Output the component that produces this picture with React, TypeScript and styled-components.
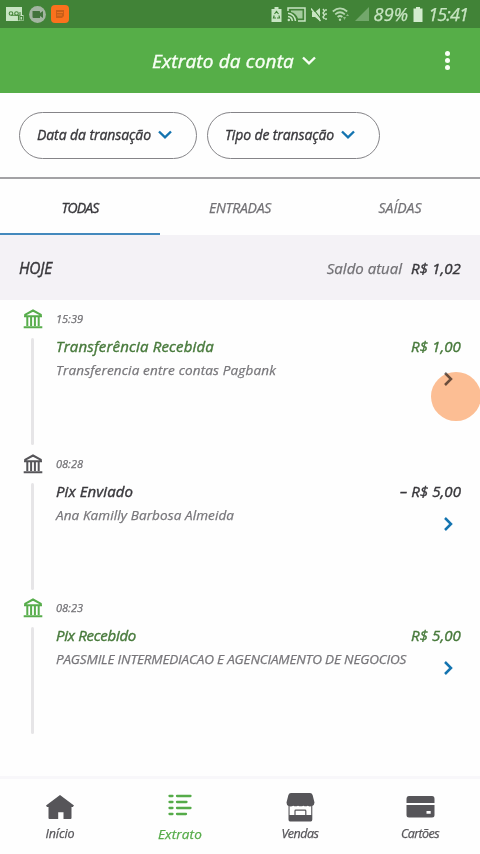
import React from 'react';
import styled, { createGlobalStyle } from 'styled-components';

const GlobalStyle = createGlobalStyle`
  * { box-sizing: border-box; }
  body { margin: 0; background: #fefefe; }
`;

const Screen = styled.div`
  position: relative;
  display: flex;
  flex-direction: column;
  width: 480px;
  height: 854px;
  overflow: hidden;
  background: #fefefe;
  color: #39383c;
  font-family: 'Open Sans', 'Noto Sans', sans-serif;
  font-style: italic;
`;

const Label = styled.span<{ $size: number; $track?: number; $color?: string; $stroke?: number }>`
  font-size: ${p => p.$size}px;
  letter-spacing: ${p => p.$track ?? 0}px;
  color: ${p => p.$color ?? 'inherit'};
  -webkit-text-stroke: ${p => p.$stroke ?? 0.25}px currentColor;
  line-height: 20px;
  white-space: nowrap;
`;

const StatusBar = styled.div`
  display: flex;
  align-items: center;
  justify-content: space-between;
  height: 28px;
  padding: 0 12px 0 6px;
  background: #418337;
  color: #c8e5c3;
`;

const StatusGroup = styled.div<{ $gap: number }>`
  display: flex;
  align-items: center;
  gap: ${p => p.$gap}px;
`;

const Header = styled.header`
  display: grid;
  grid-template-columns: 48px 1fr 48px;
  align-items: center;
  height: 65px;
  padding: 0 9px 0 12px;
  background: #56ae48;
  color: #f8fff5;
`;

const AccountPicker = styled.div`
  grid-column: 2;
  display: flex;
  align-items: center;
  justify-content: center;
  gap: 8px;
  padding-right: 15px;
`;

const Kebab = styled.div`
  display: flex;
  flex-direction: column;
  align-items: center;
  gap: 2px;
`;

const Dot = styled.i`
  width: 5px;
  height: 5px;
  border-radius: 50%;
  background: #f8fff5;
`;

const Filters = styled.div`
  display: flex;
  gap: 10px;
  height: 86px;
  padding: 19px 18px 0 19px;
  border-bottom: 2px solid #a3a2a5;
`;

const Pill = styled.div<{ $width: number }>`
  display: flex;
  align-items: center;
  gap: 7px;
  width: ${p => p.$width}px;
  height: 47px;
  padding: 0 0 1px 17px;
  border: 1.5px solid #858488;
  border-radius: 24px;
`;

const Tabs = styled.div`
  display: grid;
  grid-template-columns: repeat(3, 160px);
  height: 56px;
`;

const Tab = styled.div<{ $active?: boolean }>`
  display: flex;
  align-items: center;
  justify-content: center;
  padding-top: 3px;
  border-bottom: 2px solid ${p => (p.$active ? '#4389bd' : 'transparent')};
  color: ${p => (p.$active ? '#39383c' : '#727175')};
`;

const DayHeader = styled.div`
  display: flex;
  align-items: center;
  justify-content: space-between;
  height: 65px;
  padding: 1px 19px 0 19px;
  background: #f4f2f6;
`;

const Balance = styled.div`
  display: flex;
  gap: 9px;
`;

const Entries = styled.div`
  flex: 1;
`;

const Entry = styled.div`
  display: grid;
  grid-template-columns: 56px 1fr;
  height: 144.7px;
  padding-right: 19px;
`;

const Rail = styled.div`
  display: flex;
  flex-direction: column;
  align-items: center;
  padding: 9px 0 0 9px;
  gap: 9px;
`;

const RailLine = styled.div`
  width: 3px;
  height: 107px;
  border-radius: 2px;
  background: #e6e5e7;
`;

const EntryBody = styled.div`
  display: flex;
  flex-direction: column;
  padding-top: 9px;
`;

const EntryTitle = styled.div`
  display: flex;
  justify-content: space-between;
  margin: 7px 0 4px;
`;

const EntryDetail = styled.div`
  display: flex;
  justify-content: space-between;
  padding-right: 8px;
`;

const Advance = styled.span`
  display: flex;
  margin-top: 12px;
`;

const BottomNav = styled.nav`
  display: grid;
  grid-template-columns: repeat(4, 120px);
  height: 78px;
  border-top: 3px solid #f8f7fa;
`;

const NavItem = styled.div<{ $active?: boolean }>`
  display: flex;
  flex-direction: column;
  align-items: center;
  padding-top: 14px;
  color: ${p => (p.$active ? '#55ab49' : '#565559')};
`;

const TouchDot = styled.div`
  position: absolute;
  left: 431px;
  top: 372px;
  width: 50px;
  height: 49px;
  border-radius: 50%;
  background: #fdbf95;
  mix-blend-mode: multiply;
`;

const ChevronDown = ({ color }: { color: string }) => (
  <svg width="14" height="10" viewBox="0 0 14 10" fill="none" stroke={color} strokeWidth="2.4">
    <path d="M1 1.5 7 7.3 13 1.5" />
  </svg>
);

const ChevronRight = ({ color }: { color: string }) => (
  <svg width="9" height="14" viewBox="0 0 9 14" fill="none" stroke={color} strokeWidth="2.5">
    <path d="M1 1 7 7 1 13" />
  </svg>
);

const BankIcon = ({ color }: { color: string }) => (
  <svg width="20" height="20" viewBox="0 0 20 20" fill="none" stroke={color} strokeWidth="2">
    <path d="M1.5 6.2 10 1.5 18.5 6.2M1 7.2H19M4.3 7V17M8.1 8V17M11.9 8V17M15.7 7V17M.7 18.2H19.3" />
  </svg>
);

const NotificationIcons = () => (
  <>
    <svg width="18" height="15" viewBox="0 0 18 15">
      <path d="M0 0H16V8H17.5V14H0Z" fill="#c8e5c3" />
      <g fill="none" stroke="#458539" strokeWidth="1.1">
        <circle cx="5" cy="6.5" r="1.8" />
        <circle cx="10.5" cy="6.5" r="1.8" />
        <path d="M5 8.3H14V5M12.5 8.5V13.5M14 9.5H16.5V13H14Z" />
      </g>
    </svg>
    <svg width="17" height="17" viewBox="0 0 17 17">
      <circle cx="8.5" cy="8.5" r="8.4" fill="#a3b5a1" />
      <path d="M3.5 5H10.5Q11 5 11 6V7L14 5V12L11 10V12H4.5Q3.5 12 3.5 11Z" fill="#42733c" />
    </svg>
    <svg width="18" height="18" viewBox="0 0 18 18">
      <rect width="18" height="18" rx="4" fill="#fb711d" />
      <path d="M5 5H13V11L11 13H5Z" fill="#c95e18" />
      <path d="M6 7.5H12M6 10H11" stroke="#ef741f" />
    </svg>
  </>
);

const SystemIcons = () => (
  <>
    <svg width="11" height="15" viewBox="0 0 11 15">
      <path d="M3.5 0H7.5V2H10.5V15H.5V2H3.5Z" fill="#c8e5c3" />
      <path d="M3.5 7 5.5 4.5 7.5 7M8 8.5 8.5 11H6M5 11H2.5L3.2 8.5" fill="none" stroke="#418337" strokeWidth="1.2" />
    </svg>
    <svg width="19" height="15" viewBox="0 0 19 15" fill="none" stroke="#c8e5c3" strokeWidth="1.5">
      <path d="M1 4V1H18V14H11M1 6.3A8 8 0 0 1 8.5 14M1 9.5A4.8 4.8 0 0 1 5.3 14" />
      <path d="M4 3.5H15.5V11.5H11Q9 6 4 5Z" fill="#a3cc9d" stroke="none" />
      <circle cx="1.8" cy="13" r="1.2" fill="#c8e5c3" stroke="none" />
    </svg>
    <svg width="16" height="15" viewBox="0 0 16 15">
      <path d="M1 5H4L9 1V14L4 10H1Z" fill="#c8e5c3" />
      <path d="M1.6 1 10.5 12.5" stroke="#418337" strokeWidth="1.2" />
      <path d="M0 1.5 9.5 14M12 2 13.5 4 12 6 13.5 8 12 10 13.5 12M15 2V4M15 6V8M15 11V13" fill="none" stroke="#c8e5c3" strokeWidth="1.4" />
    </svg>
    <svg width="18" height="15" viewBox="0 0 18 15" fill="none" stroke="#b5d7af" strokeWidth="1.7">
      <path d="M.8 4.5Q8 -1.7 15.2 4.5M3.2 7.3Q8 3.2 12.8 7.3M5.6 10Q8 8 10.4 10" />
      <circle cx="8" cy="12.8" r="1.2" fill="#b5d7af" stroke="none" />
      <path d="M11 10H14L12.5 13ZM14 9H17L15.5 7Z" fill="#8eba87" stroke="none" />
    </svg>
    <svg width="14" height="14" viewBox="0 0 14 14">
      <path d="M0 14 14 0V14Z" fill="#72a76b" />
    </svg>
  </>
);

const HomeIcon = () => (
  <svg width="30" height="26" viewBox="0 0 30 26" fill="currentColor">
    <path d="M15 1 29 11.5 27.8 13H26.5V24Q26.5 25 25.5 25H18.5V18.3H13.2V25H4.5Q3.5 25 3.5 24V13H2L1 11.5Z" />
  </svg>
);

const ListIcon = () => (
  <svg width="26" height="26" viewBox="0 0 26 26" fill="none" stroke="currentColor" strokeWidth="2.3" strokeLinecap="round">
    <path d="M2.5 2H5.5M10 2H23.5M2.5 8H5.5M10 8H19.5M2.5 14H5.5M10 14H23.5M2.5 20H5.5M10 20H19" />
  </svg>
);

const StoreIcon = () => (
  <svg width="29" height="29" viewBox="0 0 29 29" fill="currentColor">
    <path d="M5 0H24Q26 0 26.6 2L28.5 9.5Q28.5 12 26 13Q23.5 14 21.8 12.7Q19.5 14 17.5 12.7Q14.5 14 12 12.7Q9.5 14 7.3 12.7Q5 14 2.6 13Q.4 12 .5 9.5L2.4 2Q3 0 5 0Z" />
    <path d="M2.5 12H3.6V22H25.2V12H26.3V26.5Q26.3 28.5 24.8 28.5H4Q2.5 28.5 2.5 26.5Z" />
    <path d="M9 22V18Q9 17.2 9.8 17.2H19Q19.8 17.2 19.8 18V22" fill="none" stroke="currentColor" strokeWidth="1.2" />
  </svg>
);

const CardIcon = () => (
  <svg width="29" height="22" viewBox="0 0 29 22" fill="currentColor">
    <path d="M3 0H26Q28.5 0 28.5 3V7H.5V3Q.5 0 3 0Z" />
    <path d="M.5 9H28.5V19Q28.5 21.5 26 21.5H3Q.5 21.5 .5 19ZM20.5 15V17.8H24.7V15Z" fillRule="evenodd" />
  </svg>
);

const IconSlot = styled.div<{ $drop?: number }>`
  display: flex;
  align-items: flex-start;
  height: 31px;
  padding-top: ${p => p.$drop ?? 0}px;
`;

const GREEN = '#487a3c';
const INK = '#39383c';
const BLUE = '#1474b0';

const entries = [
  {
    time: '15:39', icon: '#58ad4c', color: GREEN, title: 'Transferência Recebida', titleTrack: 0.18,
    amount: 'R$ 1,00', amountTrack: 0.11, detail: 'Transferencia entre contas Pagbank', detailTrack: 0.17, arrow: '#6b6665',
  },
  {
    time: '08:28', icon: '#565559', color: INK, title: 'Pix Enviado', titleTrack: 0.09,
    amount: '– R$ 5,00', amountTrack: 0.07, detail: 'Ana Kamilly Barbosa Almeida', detailTrack: 0.11, arrow: BLUE,
  },
  {
    time: '08:23', icon: '#58ad4c', color: GREEN, title: 'Pix Recebido', titleTrack: -0.27,
    amount: 'R$ 5,00', amountTrack: 0.11, detail: 'PAGSMILE INTERMEDIACAO E AGENCIAMENTO DE NEGOCIOS', detailTrack: -0.17, arrow: BLUE,
  },
];

export default function App() {
  return (
    <Screen>
      <GlobalStyle />
      <StatusBar>
        <StatusGroup $gap={5}>
          <NotificationIcons />
        </StatusGroup>
        <StatusGroup $gap={5}>
          <SystemIcons />
          <Label $size={18} $track={0.2}>89%</Label>
          <svg width="10" height="15" viewBox="0 0 10 15">
            <path d="M3 0H7V1.5H9.5V15H.5V1.5H3Z" fill="#d3ebce" />
          </svg>
          <Label $size={18} $track={-0.9}>15:41</Label>
        </StatusGroup>
      </StatusBar>

      <Header>
        <AccountPicker>
          <Label $size={19} $track={0.17} $stroke={0.4}>Extrato da conta</Label>
          <ChevronDown color="#f8fff5" />
        </AccountPicker>
        <Kebab>
          <Dot />
          <Dot />
          <Dot />
        </Kebab>
      </Header>

      <Filters>
        <Pill $width={178}>
          <Label $size={14} $track={-0.08} $stroke={0.35}>Data da transação</Label>
          <ChevronDown color={BLUE} />
        </Pill>
        <Pill $width={173}>
          <Label $size={14} $track={-0.12} $stroke={0.35}>Tipo de transação</Label>
          <ChevronDown color={BLUE} />
        </Pill>
      </Filters>

      <Tabs>
        <Tab $active><Label $size={14} $track={-0.87} $stroke={0.35}>TODAS</Label></Tab>
        <Tab><Label $size={14} $track={-0.27}>ENTRADAS</Label></Tab>
        <Tab><Label $size={14}>SAÍDAS</Label></Tab>
      </Tabs>

      <DayHeader>
        <Label $size={15.5} $track={-0.22} $stroke={0.4}>HOJE</Label>
        <Balance>
          <Label $size={15} $color="#727175">Saldo atual</Label>
          <Label $size={15} $track={0.11} $stroke={0.4}>R$ 1,02</Label>
        </Balance>
      </DayHeader>

      <Entries>
        {entries.map(e => (
          <Entry key={e.time}>
            <Rail>
              <BankIcon color={e.icon} />
              <RailLine />
            </Rail>
            <EntryBody>
              <Label $size={11} $color="#727175">{e.time}</Label>
              <EntryTitle>
                <Label $size={15} $track={e.titleTrack} $color={e.color} $stroke={0.4}>{e.title}</Label>
                <Label $size={15} $track={e.amountTrack} $color={e.color} $stroke={0.4}>{e.amount}</Label>
              </EntryTitle>
              <EntryDetail>
                <Label $size={13.5} $track={e.detailTrack} $color="#77767a">{e.detail}</Label>
                <Advance><ChevronRight color={e.arrow} /></Advance>
              </EntryDetail>
            </EntryBody>
          </Entry>
        ))}
      </Entries>

      <BottomNav>
        <NavItem>
          <IconSlot $drop={1}><HomeIcon /></IconSlot>
          <Label $size={12.5} $track={-0.1}>Início</Label>
        </NavItem>
        <NavItem $active>
          <IconSlot $drop={1}><ListIcon /></IconSlot>
          <Label $size={13.5} $track={0.15}>Extrato</Label>
        </NavItem>
        <NavItem>
          <IconSlot><StoreIcon /></IconSlot>
          <Label $size={12.5} $track={-0.5}>Vendas</Label>
        </NavItem>
        <NavItem>
          <IconSlot $drop={3}><CardIcon /></IconSlot>
          <Label $size={12.5} $track={-0.59}>Cartões</Label>
        </NavItem>
      </BottomNav>

      <TouchDot />
    </Screen>
  );
}
